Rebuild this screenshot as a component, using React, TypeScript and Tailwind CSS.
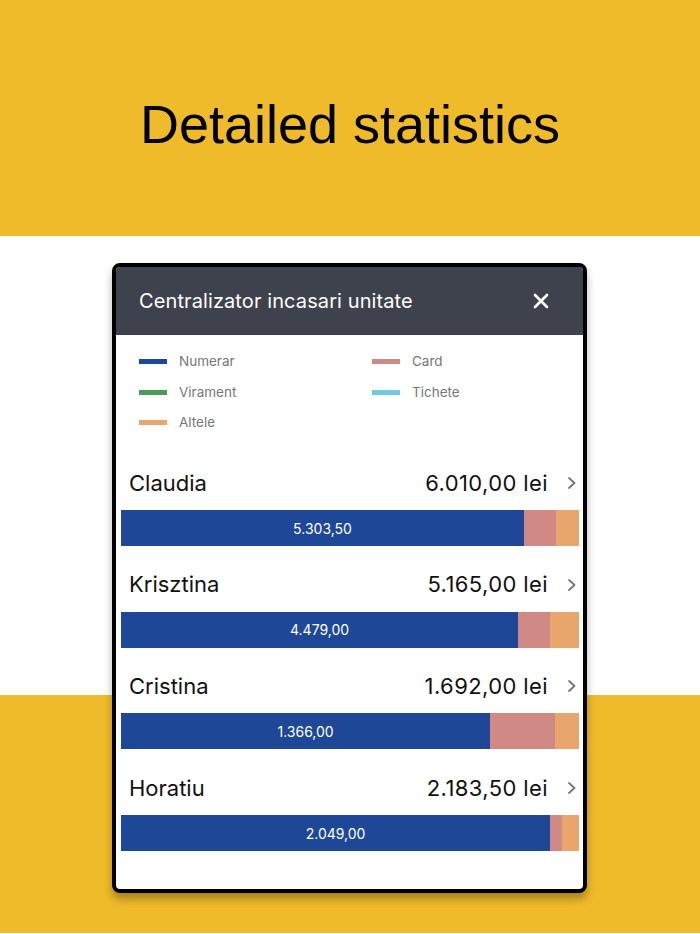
import { X } from "lucide-react";

const legend = [
  { label: "Numerar", color: "bg-[#1e4798]" },
  { label: "Card", color: "bg-[#d08985]" },
  { label: "Virament", color: "bg-[#4a9a5c]" },
  { label: "Tichete", color: "bg-[#6ccbdc]" },
  { label: "Altele", color: "bg-[#e9a66c]" },
];

const rows = [
  { name: "Claudia", total: "6.010,00 lei", cash: "5.303,50", parts: [88.0, 7.0, 5.0] },
  { name: "Krisztina", total: "5.165,00 lei", cash: "4.479,00", parts: [86.7, 7.0, 6.3] },
  { name: "Cristina", total: "1.692,00 lei", cash: "1.366,00", parts: [80.6, 14.2, 5.2] },
  { name: "Horatiu", total: "2.183,50 lei", cash: "2.049,00", parts: [93.7, 2.6, 3.7] },
];

function Row({ row }: { row: (typeof rows)[number] }) {
  return (
    <div className="flex flex-col">
      <div className="flex items-center h-[26px] pl-[8px] pr-[3px] text-[22px] text-[#111]">
        <span className="flex-1">{row.name}</span>
        <span className="tracking-[0.4px]">{row.total}</span>
        <svg width="8" height="12" viewBox="0 0 8 12" className="ml-[20px]" fill="none">
          <polyline points="1,1 6.5,6 1,11" stroke="#6b7280" strokeWidth="1.7" strokeLinecap="round" strokeLinejoin="round" />
        </svg>
      </div>
      <div className="flex h-[36px] mt-[14px]">
        <div
          className="bg-[#1e4798] flex items-center justify-center text-white text-[14px]"
          style={{ width: `${row.parts[0]}%` }}
        >
          {row.cash}
        </div>
        <div className="bg-[#d08985]" style={{ width: `${row.parts[1]}%` }} />
        <div className="bg-[#e9a66c]" style={{ width: `${row.parts[2]}%` }} />
      </div>
    </div>
  );
}

export default function App() {
  return (
    <div className="relative w-[700px] h-[934px] bg-white" style={{ fontFamily: "Inter, 'Noto Sans', sans-serif" }}>
      {/* background bands */}
      <div className="h-[236px] bg-[#efbb2b] flex items-center justify-center pt-[12px]">
        <h1 className="text-[54px] text-black leading-none" style={{ fontFamily: "'Liberation Sans', Arial, sans-serif" }}>
          Detailed statistics
        </h1>
      </div>
      <div className="h-[459px] bg-white" />
      <div className="h-[238px] bg-[#efbb2b]" />

      {/* phone card */}
      <div className="absolute left-[112px] top-[263px] w-[475px] h-[630px] rounded-[8px] border-[4px] border-black bg-white overflow-hidden shadow-[0_6px_8px_rgba(0,0,0,0.3)] flex flex-col">
        <div className="h-[68px] bg-[#3d424d] flex items-center pl-[23px] pr-[30px] shrink-0">
          <span className="flex-1 text-white text-[20px] tracking-[0.1px]">Centralizator incasari unitate</span>
          <X className="w-[24px] h-[24px] text-white" strokeWidth={2.6} />
        </div>
        <div className="grid grid-cols-[233px_1fr] gap-y-[13.5px] pl-[23px] pt-[18px] text-[13.5px] text-[#777]">
          {legend.map((l) => (
            <div key={l.label} className="flex items-center h-[17px]">
              <span className={`w-[28px] h-[5px] ${l.color}`} />
              <span className="ml-[12px]">{l.label}</span>
            </div>
          ))}
        </div>
        <div className="flex flex-col gap-[25.7px] pl-[5px] pr-[4px] mt-[39px]">
          {rows.map((r) => (
            <Row key={r.name} row={r} />
          ))}
        </div>
      </div>
    </div>
  );
}
